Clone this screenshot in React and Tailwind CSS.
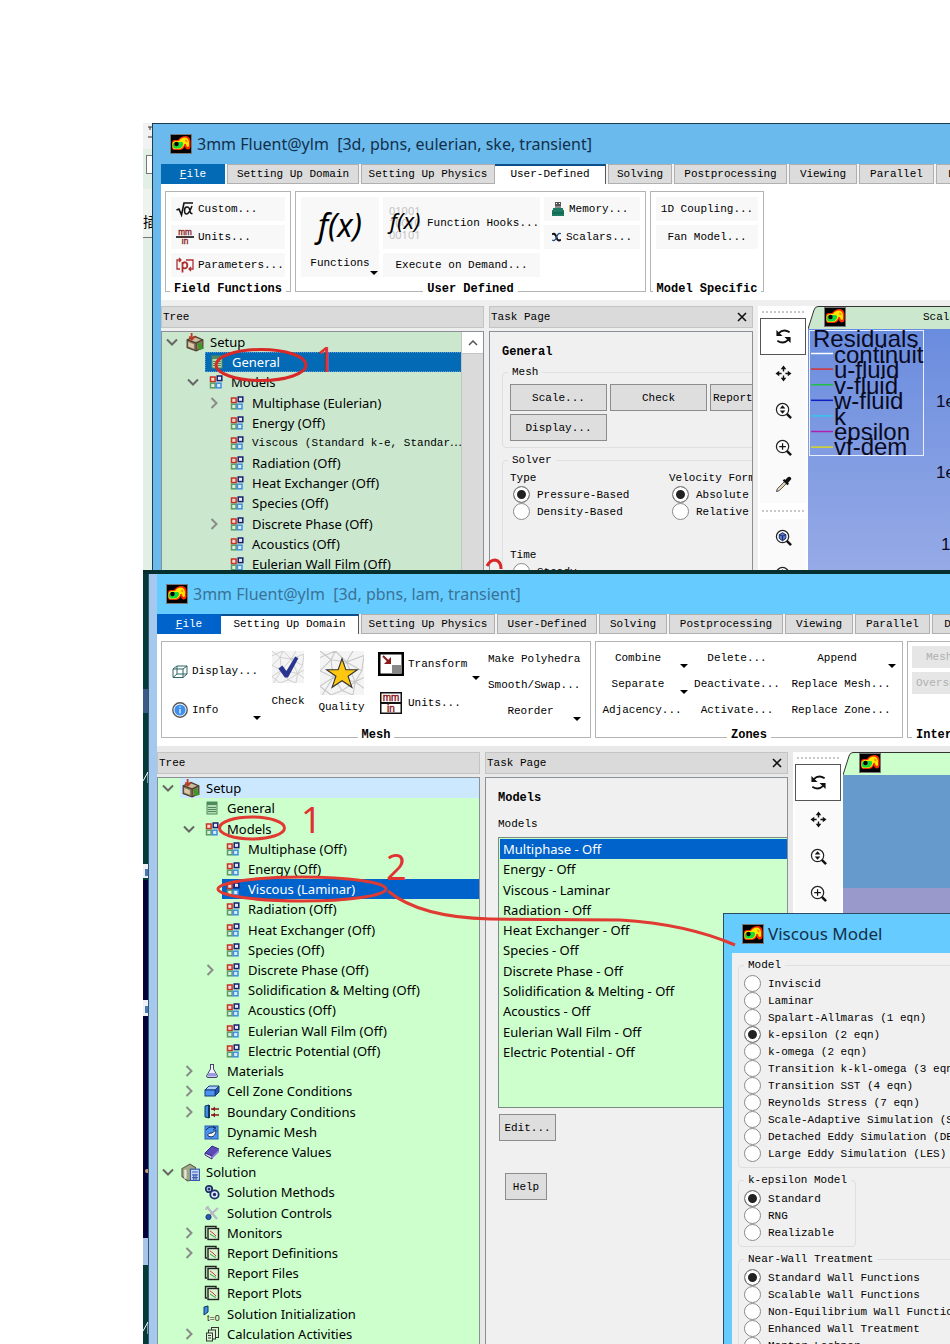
import React from "react";

const MONO = "font-['Liberation_Mono','Noto_Sans_CJK_SC',monospace] text-[11px] leading-4 text-black";
const SANS = "font-['Noto_Sans','Open_Sans',sans-serif]";

/* ---------- icons ---------- */

function FluentIcon() {
  return (
    <svg viewBox="0 0 22 20" className="h-5 w-[22px] shrink-0" aria-hidden="true">
      <rect x="0.5" y="0.5" width="21" height="19" fill="#000" stroke="#777" />
      <path d="M2 9 Q2 6 5 6 H8 Q11 2 16 2 Q20 2.500 20.500 7 V13 Q20 16 17 15.500 Q15 14 14.500 12 Q14 16 9 16 H4 Q2 15.500 2 13Z" fill="#ff2a00" />
      <path d="M2.500 9.500 Q3 7 6 7 H9 Q11 3.500 15 3.500 Q18.500 4 19 8 V12 Q18 14 16.500 12 Q16 9 14.500 10 Q13 15 8.500 15 H4 Q2.500 14.500 2.500 13Z" fill="#ffe800" />
      <path d="M3 10 Q3.500 8 6 8 H12 Q14 9 12.500 12 Q11 14.500 8 14.500 H4.500 Q3 14 3 12Z" fill="#19d83b" />
      <path d="M15 5.500 L17 6 L17.500 8.500 L15.500 8Z" fill="#ff8a00" />
      <circle cx="6.500" cy="10" r="2.200" fill="#000" />
    </svg>
  );
}

function Square({ x, y, c, f }) {
  return <rect x={x} y={y} width="4.600" height="4.600" fill={f} stroke={c} strokeWidth="1.500" />;
}

const treeIcons = {
  setup: (
    <g>
      <path d="M1 6 L8 3 L15 6 V13 L9 16 L1 13Z" fill="#8a7a62" stroke="#4a3a2a" />
      <path d="M1 6 L9 9 L15 6 M9 9 V16" stroke="#4a3a2a" fill="none" />
      <path d="M2 8 L7 10 V14 L2 12Z" fill="#d8c8a8" />
      <path d="M3 6 L8 4 L13 6 L9 8Z" fill="#c8bca0" />
      <path d="M5 0 V4 M3 3 L5 6 L8 3" stroke="#c03a20" strokeWidth="1.6" fill="none" />
      <path d="M10 10 L13 8 L14 12 L16 14 L12 15Z" fill="#3a9a20" />
    </g>
  ),
  sheet: (
    <g>
      <rect x="3" y="2" width="10" height="12" fill="#b5dcb5" stroke="#4e8a5c" />
      <rect x="3" y="2" width="10" height="3" fill="#4e8a5c" />
      <path d="M4 7.500 H12 M4 9.500 H12 M4 11.500 H12" stroke="#4e8a5c" />
    </g>
  ),
  models: (
    <g>
      <Square x="2.500" y="3" c="#c83222" f="#f8d8d0" />
      <Square x="9.200" y="2" c="#15206e" f="#e8e8ff" />
      <Square x="2.500" y="9.200" c="#5c9a68" f="#d8f0d8" />
      <Square x="8.400" y="9.200" c="#3f8fe0" f="#d8ecff" />
    </g>
  ),
  flask: (
    <g>
      <path d="M6 1.500 H10 M6.500 2 V6 L2.500 13 Q2.500 14.500 4 14.500 H12 Q13.500 14.500 13.500 13 L9.500 6 V2" fill="#f4f4ff" stroke="#44446a" />
      <path d="M4.500 10 H11.500 L13 13.500 H3Z" fill="#9a9ae0" />
    </g>
  ),
  cell: (
    <g stroke="#163a7a">
      <path d="M1 7 L5 3 H15 L11 7Z" fill="#a8d0ff" />
      <path d="M11 7 L15 3 V9 L11 13Z" fill="#2458b0" />
      <rect x="1" y="7" width="10" height="6" fill="#4a94f0" />
    </g>
  ),
  bc: (
    <g>
      <path d="M1 2 L5 1 V14 L1 13Z" fill="#3f8fe0" stroke="#123060" />
      <path d="M5 1 V14" stroke="#123060" strokeWidth="2" />
      <path d="M7 5 H15 M7 11 H15" stroke="#8a1a1a" strokeWidth="1.6" />
      <path d="M11 2.500 L8 5 L11 7.500Z M11 8.500 L8 11 L11 13.500Z" fill="#8a1a1a" />
    </g>
  ),
  mesh: (
    <g>
      <rect x="1" y="2" width="13" height="13" fill="#4a94f0" stroke="#2a5ab0" />
      <path d="M2 6 Q6 1 11 4 M9 2 L12 4 L9 6" stroke="#123060" fill="none" />
      <path d="M4 12 Q3 9 8 9 L12 6 Q12 12 7 13Z" fill="#fff" stroke="#123060" />
    </g>
  ),
  book: (
    <g>
      <path d="M1 9 L8 2 L15 5 L8 12Z" fill="#5a4ab8" stroke="#3a2a80" />
      <path d="M1 9 V11 L8 15 V12Z" fill="#ded8f4" stroke="#3a2a80" />
      <path d="M8 12 L15 5 V8 L8 15Z" fill="#8a7ad8" />
    </g>
  ),
  solution: (
    <g>
      <path d="M0 5 L7 1 L12 4 V14 L5 16 L0 12Z" fill="#a0a888" stroke="#5a5a4a" />
      <path d="M3 6 V14" stroke="#e8ead8" strokeWidth="2" />
      <rect x="7.500" y="5.500" width="8" height="10" fill="#c8d8f8" stroke="#3a5aa8" />
      <path d="M9 8 H14 M9 10.500 H14 M9 13 H14 M10.500 10 V15 M12.500 10 V15" stroke="#3a5aa8" />
    </g>
  ),
  gears: (
    <g fill="#dfeaff" stroke="#1c2f66" strokeWidth="1.800">
      <circle cx="5" cy="5" r="3.200" />
      <circle cx="10.500" cy="10.500" r="4.200" />
      <circle cx="5" cy="5" r="0.600" />
      <circle cx="10.500" cy="10.500" r="0.800" />
    </g>
  ),
  tools: (
    <g>
      <path d="M3 2 L13 14 M14 3 L6 10" stroke="#b8b8c4" strokeWidth="2.200" />
      <path d="M2 5 Q2 1 5 2" stroke="#b8b8c4" strokeWidth="1.500" fill="none" />
      <circle cx="4.500" cy="12" r="2.600" fill="#2a5ab0" stroke="#163a7a" />
    </g>
  ),
  monitor: (
    <g>
      <path d="M3 13 H1.500 V1.500 H12 V3" fill="none" stroke="#222" strokeWidth="1.400" />
      <rect x="4" y="3.500" width="10.500" height="11" fill="#d8f4d0" stroke="#222" strokeWidth="1.400" />
      <path d="M6 6 L9 8 L12 11" stroke="#d04030" fill="none" />
      <path d="M6 9 L9 11 L12 12.500" stroke="#30a040" fill="none" />
    </g>
  ),
  init: (
    <g>
      <path d="M0 1 L4 0 V6 L0 9Z" fill="#3f8fe0" stroke="#123060" />
      <text x="3" y="15" fontSize="9" fontFamily="Liberation Sans" fill="#4a1010">t=0</text>
    </g>
  ),
  calc: (
    <g fill="#d8f4d0" stroke="#333">
      <rect x="7.500" y="1.500" width="7" height="10" />
      <rect x="4.500" y="4" width="7" height="9" />
      <rect x="2.500" y="7" width="6" height="8" />
      <path d="M4 9.500 H7 M4 12 H7" />
    </g>
  ),
};

function TreeIcon({ name }) {
  return (
    <svg
      viewBox="0 0 16 16"
      className={`overflow-visible ${name === "setup" || name === "solution" ? "h-[18px] w-[18px]" : "h-4 w-4"}`}
      aria-hidden="true"
    >
      {treeIcons[name]}
    </svg>
  );
}

function Chevron({ open }) {
  return (
    <svg viewBox="0 0 12 12" className="h-3 w-3" fill="none" stroke={open ? "#666" : "#8a8a8a"} strokeWidth="2" aria-hidden="true">
      <path d={open ? "M1 3.500 L6 8.500 L11 3.500" : "M3.500 1 L8.500 6 L3.500 11"} />
    </svg>
  );
}

function Caret({ className = "" }) {
  return (
    <svg viewBox="0 0 8 4" className={`h-1 w-2 shrink-0 ${className}`} aria-hidden="true">
      <path d="M0 0 H8 L4 4Z" fill="#000" />
    </svg>
  );
}

function MmIn({ boxed }) {
  return (
    <svg viewBox="0 0 22 22" className={boxed ? "h-[22px] w-[22px]" : "h-[18px] w-[18px]"} aria-hidden="true">
      {boxed && <rect x="0.750" y="0.750" width="20.500" height="20.500" fill="#fff" stroke="#111" strokeWidth="1.500" />}
      <text x="11" y="8.500" textAnchor="middle" fontSize="10" fontFamily="Liberation Sans" fill="#8a1a1a" stroke="#8a1a1a" strokeWidth="0.400">mm</text>
      <path d="M0 11 H22" stroke="#111" strokeWidth="2" />
      <text x="11" y="20" textAnchor="middle" fontSize="10" fontFamily="Liberation Sans" fill="#8a1a1a" stroke="#8a1a1a" strokeWidth="0.400">in</text>
    </svg>
  );
}

function SqrtAlpha() {
  return (
    <svg viewBox="0 0 18 16" className="h-4 w-[18px]" fill="none" stroke="#111" aria-hidden="true">
      <path d="M0.500 9 L3 8 L5.500 14 L8 2 H17" strokeWidth="1.600" />
      <path d="M16 5 Q13 13 10.500 13 Q8.500 13 8.500 9.500 Q8.500 6 11 6 Q13.500 6 14 10 Q14.500 13 16.500 12.500" strokeWidth="1.500" />
    </svg>
  );
}

function ParamIcon() {
  return (
    <svg viewBox="0 0 18 16" className="h-4 w-[18px] shrink-0" fill="none" stroke="#b03030" strokeWidth="1.300" aria-hidden="true">
      <path d="M4 12 H1 V3 H5 M3 1 L5 3 L3 5 M10 3 H17 V12 H13 M15 10 L13 12 L15 14" />
      <path d="M6.500 5 V15.500 M6.500 7 Q8 4.500 10 5.500 Q12 7 11 10 Q9.500 12.500 6.500 10.500" strokeWidth="1.800" />
    </svg>
  );
}

function MemoryIcon() {
  return (
    <svg viewBox="0 0 12 14" className="h-3.5 w-3" aria-hidden="true">
      <rect x="3" y="0" width="6" height="4" fill="#555" />
      <rect x="4" y="1" width="1" height="1" fill="#fff" />
      <rect x="7" y="1" width="1" height="1" fill="#fff" />
      <path d="M1 6 H11 V8 H12 V14 H0 V8 H1Z" fill="#1d7a63" />
      <path d="M3 4 H9 V6 H3Z" fill="#888" />
      <path d="M0 11 H12" stroke="#0d5a45" />
    </svg>
  );
}

function ScalarIcon() {
  return (
    <svg viewBox="0 0 12 12" className="h-3 w-3" fill="none" aria-hidden="true">
      <path d="M0 2.500 Q3 0 5 4 L7 9 Q9 12 12 9.500" stroke="#111" strokeWidth="2.600" />
      <path d="M12 1.500 Q9 0 7 4 L5 9 Q3 12 0 10" stroke="#24508c" strokeWidth="1.800" />
    </svg>
  );
}

function CubeIcon() {
  return (
    <svg viewBox="0 0 16 13" className="h-[13px] w-4" fill="none" stroke="#2f6464" aria-hidden="true">
      <path d="M1 4 H11 V12.500 H1Z M5 1 H15 V9 H5Z M1 4 L5 1 M11 4 L15 1 M11 12.500 L15 9 M1 12.500 L5 9" />
    </svg>
  );
}

function InfoIcon() {
  return (
    <svg viewBox="0 0 16 16" className="h-4 w-4" aria-hidden="true">
      <circle cx="8" cy="8" r="7.200" fill="#fff" stroke="#555" strokeWidth="1.400" />
      <circle cx="8" cy="8" r="5.600" fill="#3d8ff0" />
      <path d="M8 7 V11.500 M8 4.500 V5.800" stroke="#cfe4ff" strokeWidth="1.500" />
    </svg>
  );
}

function MeshPatch({ size, children }) {
  return (
    <svg viewBox="0 0 40 40" className={size} aria-hidden="true">
      <rect width="40" height="40" fill="#f4f4f4" />
      <path
        d="M0 6 L14 0 L24 10 L40 4 M0 18 L10 8 L24 10 L30 0 M0 18 L12 24 L24 10 L38 18 L40 4 M0 32 L12 24 L20 36 L32 28 L38 18 M0 32 L10 40 L20 36 L30 40 L32 28 L40 34 M10 8 L12 24 L32 28 M14 0 L10 8 L0 0 M2 40 L12 24 M24 10 L32 28 L40 24"
        stroke="#c8c8c8"
        fill="none"
      />
      {children}
    </svg>
  );
}

function TransformIcon() {
  return (
    <svg viewBox="0 0 26 24" className="h-6 w-[26px]" aria-hidden="true">
      <rect x="1.250" y="1.250" width="23.500" height="21.500" fill="#fff" stroke="#000" strokeWidth="2.500" />
      <path d="M14 13 H23.500 V21.500 H14Z" fill="#888" />
      <path d="M5 4 L12 11" stroke="#8a1a1a" strokeWidth="2" />
      <path d="M13 5 V12 H6Z" fill="#8a1a1a" />
    </svg>
  );
}

const lens = (
  <g>
    <circle cx="8" cy="8" r="6.500" fill="#fff" stroke="#222" strokeWidth="1.300" />
    <path d="M12.500 12.500 L17 17" stroke="#111" strokeWidth="2.600" />
  </g>
);

const toolIcons = {
  rotate: (
    <g>
      <path d="M4 5.500 Q9 0.500 15.500 4.500 M14 12.500 Q9 17.500 2.500 13.500" fill="none" stroke="#111" strokeWidth="2" />
      <path d="M1.500 2 V8.500 H8Z M16.500 16 V9.500 H10Z" fill="#111" />
    </g>
  ),
  move: (
    <g fill="#111">
      <path d="M9 0.500 L12 4.500 H6Z M9 17.500 L12 13.500 H6Z M0.500 9 L4.500 6 V12Z M17.500 9 L13.500 6 V12Z" />
      <path d="M9 4 V7 M9 11 V14 M4 9 H7 M11 9 H14" stroke="#111" strokeWidth="1.500" />
    </g>
  ),
  zoomBox: (
    <g>
      {lens}
      <path d="M8 3.500 L11 7 H5Z M8 12.500 L11 9 H5Z" fill="#111" />
    </g>
  ),
  zoomIn: (
    <g>
      {lens}
      <path d="M8 4.500 V11.500 M4.500 8 H11.500" stroke="#111" strokeWidth="1.300" />
    </g>
  ),
  probe: (
    <g>
      <path d="M1.500 16.500 L2.500 13.500 L10 6 L12 8 L4.500 15.500Z" fill="#e8d8b8" stroke="#444" />
      <path d="M9 4 L14 9" stroke="#111" strokeWidth="2.400" />
      <path d="M11 5 L14 2 Q16 1 16.500 3 L13 7Z" fill="#111" stroke="#111" strokeWidth="1.500" />
    </g>
  ),
  fit: (
    <g>
      {lens}
      <path d="M4.500 6 L8 4 L11.500 6 V10 L8 12.500 L4.500 10Z" fill="#5a7ad0" stroke="#16245c" />
      <path d="M4.500 6 L8 7.500 L11.500 6 M8 7.500 V12" stroke="#16245c" fill="none" />
    </g>
  ),
};

/* ---------- shared parts ---------- */

function TitleBar({ text, className }) {
  return (
    <header className={`flex h-10 shrink-0 items-center gap-[5px] pl-[9px] ${className}`}>
      <FluentIcon />
      <h1 className={`${SANS} whitespace-pre text-base leading-6`}>{text}</h1>
    </header>
  );
}

function Tabs({ items, fileClass }) {
  return (
    <nav className={`${MONO} flex h-5 shrink-0 overflow-hidden bg-[#f4f4f4]`}>
      <button className={`w-16 shrink-0 text-white ${fileClass}`}>
        <span className="underline">F</span>ile
      </button>
      {items.map(([label, width, active]) => (
        <button
          key={label}
          className={`shrink-0 overflow-hidden whitespace-nowrap text-center ${width} ${
            active
              ? "border-t-2 border-r border-t-[#0d4f8a] border-r-[#555] bg-white pb-0.5"
              : "ml-0.5 border border-[#b0b0b0] bg-[#dcdcdc]"
          }`}
        >
          {label}
        </button>
      ))}
    </nav>
  );
}

function Group({ title, className = "", children }) {
  return (
    <section className={`flex shrink-0 flex-col border border-[#b4b4b4] ${className}`}>
      <div className="min-h-0 flex-1">{children}</div>
      <h2 className="-mb-1.5 self-center whitespace-nowrap bg-white px-1 font-['Liberation_Mono',monospace] text-xs leading-4 font-bold text-black">
        {title}
      </h2>
    </section>
  );
}

function Tool({ className = "", children }) {
  return (
    <button className={`flex h-6 items-center gap-1 whitespace-nowrap bg-[#f8f8f8] ${className}`}>{children}</button>
  );
}

function PanelHeader({ title, closable }) {
  return (
    <div className={`${MONO} flex h-[22px] shrink-0 items-center justify-between border border-[#c4c4c4] bg-[#dadada] pl-px pr-1`}>
      <span>{title}</span>
      {closable && (
        <button aria-label={`Close ${title}`} className="p-px">
          <svg viewBox="0 0 10 10" className="h-2.5 w-2.5" stroke="#111" strokeWidth="1.600" aria-hidden="true">
            <path d="M1 1 L9 9 M9 1 L1 9" />
          </svg>
        </button>
      )}
    </div>
  );
}

const indents = ["pl-0", "pl-[21px]", "pl-[42px]"];

function TreeRow({ row, selected, hinted }) {
  const [level, icon, label, state, mono] = row;
  return (
    <li className={`flex min-h-0 items-stretch ${indents[level]}`}>
      <span className="flex w-5 shrink-0 items-center justify-center">
        {state && <Chevron open={state === "open"} />}
      </span>
      <span className={`ml-0.5 flex min-w-0 flex-1 items-center ${selected || ""} ${hinted || ""}`}>
        <span className="flex w-[22px] shrink-0 items-center justify-center">
          <TreeIcon name={icon} />
        </span>
        <span className={`ml-1 whitespace-nowrap ${mono ? MONO : `${SANS} text-[13px] leading-5`}`}>{label}</span>
      </span>
    </li>
  );
}

function Radio({ label, name, checked }) {
  return (
    <label className="flex h-[17px] items-center gap-[7px] whitespace-nowrap">
      <input
        type="radio"
        name={name}
        defaultChecked={checked}
        className="h-[17px] w-[17px] shrink-0 appearance-none rounded-full border border-[#8a8a8a] bg-white checked:bg-[#222] checked:shadow-[inset_0_0_0_3px_#fff]"
      />
      {label}
    </label>
  );
}

function Field({ legend, className = "", children }) {
  return (
    <fieldset className={`min-w-0 rounded-sm border border-[#dce0e2] ${className}`}>
      <legend className="ml-[5px] px-1">{legend}</legend>
      {children}
    </fieldset>
  );
}

function PushButton({ className = "", children }) {
  return (
    <button className={`h-[27px] shrink-0 overflow-hidden whitespace-nowrap border border-[#8c8c8c] bg-[#dedede] ${className}`}>
      {children}
    </button>
  );
}

function Handle({ className }) {
  return (
    <div className={`flex items-center pl-1 ${className}`}>
      <div className="w-[42px] border-t-2 border-dotted border-[#c8c8c8]" />
    </div>
  );
}

function ViewTools({ groups }) {
  return (
    <div className="w-[50px] shrink-0 overflow-hidden bg-white">
      {groups.map((names, g) => (
        <div key={g}>
          <Handle className={g === 0 ? "h-3" : "h-4"} />
          {names.map((name, i) => (
            <button
              key={i}
              aria-label={name}
              className={`ml-0.5 flex h-[37px] w-[46px] items-center justify-center ${
                g === 0 && i === 0 ? "border border-[#555] bg-white" : "bg-[#fafafa]"
              }`}
            >
              <svg viewBox="0 0 18 18" className="h-[17px] w-[17px]" aria-hidden="true">
                {toolIcons[name]}
              </svg>
            </button>
          ))}
        </div>
      ))}
    </div>
  );
}

function ViewTab({ fill, bg, label }) {
  return (
    <div className="flex h-[23px] shrink-0 overflow-hidden bg-white">
      <svg viewBox="0 0 10 23" className="h-[23px] w-2.5 shrink-0" aria-hidden="true">
        <path d="M0 23 L6 4 Q7 0.500 10 0.500 V23Z" fill={fill} />
        <path d="M0 23 L6 4 Q7 0.500 10 0.500" fill="none" stroke="#333" />
      </svg>
      <div className={`${MONO} flex flex-1 items-start border-t border-[#333] pl-1.5 ${bg}`}>
        <FluentIcon />
        <span className="flex-1 whitespace-nowrap pt-0.5 pl-[77px]">{label}</span>
      </div>
    </div>
  );
}

/* ---------- first window ---------- */

const tree1 = [
  [0, "setup", "Setup", "open"],
  [1, "sheet", "General"],
  [1, "models", "Models", "open"],
  [2, "models", "Multiphase (Eulerian)", "closed"],
  [2, "models", "Energy (Off)"],
  [2, "models", "Viscous (Standard k-e, Standar⋯", null, true],
  [2, "models", "Radiation (Off)"],
  [2, "models", "Heat Exchanger (Off)"],
  [2, "models", "Species (Off)"],
  [2, "models", "Discrete Phase (Off)", "closed"],
  [2, "models", "Acoustics (Off)"],
  [2, "models", "Eulerian Wall Film (Off)"],
];

const residuals = [
  ["continuit", "#ffffff"],
  ["u-fluid", "#d83030"],
  ["v-fluid", "#20c040"],
  ["w-fluid", "#1020c0"],
  ["k", "#30c8f0"],
  ["epsilon", "#b020b0"],
  ["vf-dem", "#d8d820"],
];

function ResidualPlot() {
  return (
    <div className="min-h-0 flex-1 overflow-hidden bg-linear-to-b from-[#6a8cde] to-[#96aae6]">
      <svg viewBox="0 0 142 241" className="h-[241px] w-[142px]" fontFamily="Liberation Sans, Arial, sans-serif" role="img" aria-label="Residuals">
        <clipPath id="legend">
          <rect x="1" y="1" width="115" height="126" />
        </clipPath>
        <rect x="1.500" y="1.500" width="114" height="125" fill="none" stroke="#e8f0ff" />
        <g clipPath="url(#legend)" fontSize="24" fill="#0a0a1e">
          <text x="5" y="18">Residuals</text>
          {residuals.map(([name, color], i) => (
            <g key={name}>
              <path d={`M3 ${24.5 + i * 15.6} h22`} stroke={color} strokeWidth="1.500" />
              <text x="26" y={34 + i * 15.4}>{name}</text>
            </g>
          ))}
        </g>
        <g fontSize="17" fill="#0a0a1e">
          <text x="128" y="78">1e</text>
          <text x="128" y="149">1e</text>
          <text x="133" y="221">1</text>
        </g>
      </svg>
    </div>
  );
}

function FirstWindow() {
  return (
    <div className="flex h-[447px] shrink-0 overflow-hidden">
      <div className="w-[9px] shrink-0 overflow-hidden bg-[#e2efe5]">
        <svg viewBox="0 0 9 66" className="h-[66px] w-[9px]" aria-hidden="true">
          <rect width="9" height="26" fill="#f2f2f2" />
          <path d="M5 4 H9 M5 14 H9 M7 4 V7" stroke="#333" />
          <rect x="3.500" y="32.500" width="8" height="18" fill="#fff" stroke="#777" />
        </svg>
        <div className="h-[49px] overflow-hidden whitespace-nowrap border-b border-[#777] bg-[#eef3ee] pt-[22px] font-['Noto_Sans_CJK_SC',sans-serif] text-sm leading-5">插</div>
      </div>
      <div className="flex min-w-0 flex-1 flex-col border-t border-l border-[#1d3d55] bg-[#6bbaee] pl-2">
        <TitleBar text="3mm Fluent@ylm  [3d, pbns, eulerian, ske, transient]" className="text-[#12304a]" />
        <Tabs
          fileClass="bg-[#036ab5]"
          items={[
            ["Setting Up Domain", "w-[132px]"],
            ["Setting Up Physics", "w-[134px]"],
            ["User-Defined", "w-[111px]", true],
            ["Solving", "w-16"],
            ["Postprocessing", "w-[113px]"],
            ["Viewing", "w-[68px]"],
            ["Parallel", "w-[75px]"],
            ["Design", "w-[64px]"],
          ]}
        />
        <div className={`${MONO} flex h-[116px] shrink-0 gap-1 overflow-hidden bg-white pt-[7px] pl-1`}>
          <Group title="Field Functions" className="h-[101px] w-[126px]">
            <div className="flex flex-col gap-1 p-[5px]">
              <Tool className="px-[5px]"><SqrtAlpha />Custom...</Tool>
              <Tool className="px-[5px]"><MmIn />Units...</Tool>
              <Tool className="px-[5px]"><ParamIcon />Parameters...</Tool>
            </div>
          </Group>
          <Group title="User Defined" className="h-[101px] w-[351px]">
            <div className="flex gap-1 p-[5px]">
              <button className="flex h-20 w-[78px] flex-col items-center bg-[#f8f8f8]">
                <span className={`${SANS} h-[58px] pt-2 text-[32px] leading-10 italic`}>f(x)</span>
                <span className="flex w-full items-center justify-center">Functions</span>
                <Caret className="mr-px self-end" />
              </button>
              <div className="flex w-[157px] flex-col gap-1">
                <button className="flex h-[52px] items-center gap-0.5 bg-[#f8f8f8] pl-1">
                  <svg viewBox="0 0 38 36" className="h-9 w-[38px] shrink-0" fontFamily="Noto Sans, sans-serif" aria-hidden="true">
                    <g fontSize="11" fill="#c4c4c4">
                      <text x="2" y="10">01001</text>
                      <text x="2" y="22">10010</text>
                      <text x="2" y="34">00101</text>
                    </g>
                    <text x="3" y="24" fontSize="22" fontStyle="italic" fill="#000">f(x)</text>
                  </svg>
                  <span className="whitespace-nowrap">Function Hooks...</span>
                </button>
                <Tool className="justify-center">Execute on Demand...</Tool>
              </div>
              <div className="flex w-24 flex-col gap-1">
                <Tool className="gap-[5px] px-2"><MemoryIcon />Memory...</Tool>
                <Tool className="gap-[5px] px-2"><ScalarIcon />Scalars...</Tool>
              </div>
            </div>
          </Group>
          <Group title="Model Specific" className="h-[101px] w-[114px]">
            <div className="flex flex-col gap-1 p-[5px]">
              <Tool className="justify-center">1D Coupling...</Tool>
              <Tool className="justify-center">Fan Model...</Tool>
            </div>
          </Group>
        </div>
        <div className="flex min-h-0 flex-1 gap-[5px] bg-[#efefef] pt-1.5">
          <aside className="flex w-[323px] shrink-0 flex-col gap-[3px]">
            <PanelHeader title="Tree" />
            <div className="flex min-h-0 flex-1 overflow-hidden border border-b-0 border-[#8a9096] bg-[#cbe8cf]">
              <ul className="grid h-[242px] min-w-0 flex-1 grid-rows-12">
                {tree1.map((row, i) => (
                  <TreeRow key={row[2]} row={row} selected={i === 1 ? "border border-dotted border-[#5a9ad0] bg-[#036ab5] text-white" : ""} />
                ))}
              </ul>
              <div className="w-[22px] shrink-0 border-l border-[#c4c4c4] bg-[#dadada]">
                <button aria-label="Scroll up" className="flex h-[22px] w-full items-center justify-center border-b border-[#c4c4c4] bg-white">
                  <svg viewBox="0 0 10 6" className="h-1.5 w-2.5" fill="none" stroke="#555" strokeWidth="1.500" aria-hidden="true">
                    <path d="M1 5 L5 1 L9 5" />
                  </svg>
                </button>
              </div>
            </div>
          </aside>
          <main className="flex w-[264px] shrink-0 flex-col gap-[3px]">
            <PanelHeader title="Task Page" closable />
            <div className={`${MONO} min-h-0 flex-1 overflow-hidden border border-b-0 border-[#8a9096] bg-[#f0f0f0] pt-3 pl-3`}>
              <h2 className="text-xs leading-4 font-bold">General</h2>
              <Field legend="Mesh" className="mt-1 h-[84px] w-[300px]">
                <div className="flex flex-wrap gap-[3px] pt-1 pl-[7px]">
                  <PushButton className="w-[97px]">Scale...</PushButton>
                  <PushButton className="w-[97px]">Check</PushButton>
                  <PushButton className="w-[88px] pl-0.5 text-left">Report Quality</PushButton>
                  <PushButton className="w-[97px]">Display...</PushButton>
                </div>
              </Field>
              <Field legend="Solver" className="mt-1 w-[300px]">
                <div className="grid grid-cols-[159px_1fr] pt-0.5 pl-[7px]">
                  <div>
                    <p>Type</p>
                    <div className="pl-[3px]">
                      <Radio name="type" label="Pressure-Based" checked />
                      <Radio name="type" label="Density-Based" />
                    </div>
                  </div>
                  <div>
                    <p className="whitespace-nowrap">Velocity Formulation</p>
                    <div className="pl-[3px]">
                      <Radio name="velocity" label="Absolute" checked />
                      <Radio name="velocity" label="Relative" />
                    </div>
                  </div>
                </div>
                <div className="pt-[27px] pl-[7px]">
                  <p>Time</p>
                  <div className="pl-[3px]">
                    <Radio name="time" label="Steady" />
                  </div>
                </div>
              </Field>
            </div>
          </main>
          <div className="flex min-w-0 flex-1">
            <ViewTools groups={[["rotate", "move", "zoomBox", "zoomIn", "probe"], ["fit", "zoomBox"]]} />
            <div className="flex min-w-0 flex-1 flex-col">
              <ViewTab fill="#cbe8cf" bg="bg-[#cbe8cf]" label="Scaled Residuals" />
              <ResidualPlot />
            </div>
          </div>
        </div>
      </div>
    </div>
  );
}

/* ---------- second window ---------- */

const tree2 = [
  [0, "setup", "Setup", "open"],
  [1, "sheet", "General"],
  [1, "models", "Models", "open"],
  [2, "models", "Multiphase (Off)"],
  [2, "models", "Energy (Off)"],
  [2, "models", "Viscous (Laminar)"],
  [2, "models", "Radiation (Off)"],
  [2, "models", "Heat Exchanger (Off)"],
  [2, "models", "Species (Off)"],
  [2, "models", "Discrete Phase (Off)", "closed"],
  [2, "models", "Solidification & Melting (Off)"],
  [2, "models", "Acoustics (Off)"],
  [2, "models", "Eulerian Wall Film (Off)"],
  [2, "models", "Electric Potential (Off)"],
  [1, "flask", "Materials", "closed"],
  [1, "cell", "Cell Zone Conditions", "closed"],
  [1, "bc", "Boundary Conditions", "closed"],
  [1, "mesh", "Dynamic Mesh"],
  [1, "book", "Reference Values"],
  [0, "solution", "Solution", "open"],
  [1, "gears", "Solution Methods"],
  [1, "tools", "Solution Controls"],
  [1, "monitor", "Monitors", "closed"],
  [1, "monitor", "Report Definitions", "closed"],
  [1, "monitor", "Report Files"],
  [1, "monitor", "Report Plots"],
  [1, "init", "Solution Initialization"],
  [1, "calc", "Calculation Activities", "closed"],
];

const modelList = [
  "Multiphase - Off",
  "Energy - Off",
  "Viscous - Laminar",
  "Radiation - Off",
  "Heat Exchanger - Off",
  "Species - Off",
  "Discrete Phase - Off",
  "Solidification & Melting - Off",
  "Acoustics - Off",
  "Eulerian Wall Film - Off",
  "Electric Potential - Off",
];

function Cmd({ className = "", caret, children }) {
  return (
    <button className={`flex h-[26px] items-center whitespace-nowrap ${className}`}>
      <span className="flex-1">{children}</span>
      {caret && <Caret className="mt-4" />}
    </button>
  );
}

function MeshGroup() {
  return (
    <Group title="Mesh" className="h-[97px] w-[430px]">
      <div className="flex pt-1">
        <div className="flex w-[103px] flex-col gap-[13px] pt-3 pl-2.5">
          <button className="flex h-[26px] items-center gap-1"><CubeIcon />Display...</button>
          <button className="flex h-[26px] items-center gap-1">
            <InfoIcon />
            <span className="flex-1 text-left">Info</span>
            <Caret className="mt-4 mr-1" />
          </button>
        </div>
        <button className="flex w-[46px] flex-col items-center gap-2.5 pt-[5px]">
          <MeshPatch size="h-8 w-8">
            <path d="M8 22 L13 18 L18 25 L29 7 L33 9 L20 33 L16 33Z" fill="#2a3590" />
          </MeshPatch>
          Check
        </button>
        <button className="flex w-[61px] flex-col items-center gap-1 pt-[5px]">
          <MeshPatch size="h-11 w-11">
            <path d="M20 7 L23.500 17 H34 L25.500 23 L29 33 L20 27 L11 33 L14.500 23 L6 17 H16.500Z" fill="#ffc810" stroke="#333" />
          </MeshPatch>
          Quality
        </button>
        <div className="flex w-[108px] flex-col gap-[13px] pt-[5px] pl-1.5">
          <button className="flex h-[26px] items-center gap-1 whitespace-nowrap">
            <TransformIcon />
            <span className="flex-1 text-left">Transform</span>
            <Caret className="mt-7" />
          </button>
          <button className="flex h-[26px] items-center gap-1.5 pl-0.5"><MmIn boxed />Units...</button>
        </div>
        <div className="w-[105px] pl-2">
          <Cmd className="w-full text-left">Make Polyhedra</Cmd>
          <Cmd className="w-full text-left">Smooth/Swap...</Cmd>
          <Cmd className="w-full pr-1 text-center" caret>Reorder</Cmd>
        </div>
      </div>
    </Group>
  );
}

function ZonesGroup() {
  return (
    <Group title="Zones" className="h-[97px] w-[308px]">
      <div className="grid grid-cols-[92px_98px_1fr] pt-[3px] pr-1.5 text-center">
        <Cmd caret>Combine</Cmd>
        <Cmd>Delete...</Cmd>
        <Cmd caret>Append</Cmd>
        <Cmd caret>Separate</Cmd>
        <Cmd>Deactivate...</Cmd>
        <Cmd>Replace Mesh...</Cmd>
        <Cmd>Adjacency...</Cmd>
        <Cmd>Activate...</Cmd>
        <Cmd>Replace Zone...</Cmd>
      </div>
    </Group>
  );
}

const viscousModels = [
  "Inviscid",
  "Laminar",
  "Spalart-Allmaras (1 eqn)",
  "k-epsilon (2 eqn)",
  "k-omega (2 eqn)",
  "Transition k-kl-omega (3 eqn)",
  "Transition SST (4 eqn)",
  "Reynolds Stress (7 eqn)",
  "Scale-Adaptive Simulation (SAS)",
  "Detached Eddy Simulation (DES)",
  "Large Eddy Simulation (LES)",
];

function RadioField({ legend, name, options, checked, className }) {
  return (
    <Field legend={legend} className={className}>
      <div className="pt-0.5 pb-[5px] pl-[5px]">
        {options.map((o) => (
          <Radio key={o} name={name} label={o} checked={o === checked} />
        ))}
      </div>
    </Field>
  );
}

function ViscousDialog() {
  return (
    <div role="dialog" aria-label="Viscous Model" className="absolute top-[339px] right-0 bottom-0 left-[580px] flex flex-col overflow-hidden border-t border-l border-[#2c4c66] bg-[#66ccff] pl-2">
      <div className="flex h-[39px] shrink-0 items-center gap-1 pl-2.5">
        <FluentIcon />
        <h2 className={`${SANS} whitespace-nowrap text-[17px] leading-6 text-[#12304a]`}>Viscous Model</h2>
      </div>
      <div className={`${MONO} flex min-h-0 flex-1 flex-col gap-1 overflow-hidden bg-[#f0f0f0] pt-1 pl-1.5`}>
        <RadioField legend="Model" name="viscous" options={viscousModels} checked="k-epsilon (2 eqn)" className="w-80 shrink-0" />
        <RadioField legend="k-epsilon Model" name="ke" options={["Standard", "RNG", "Realizable"]} checked="Standard" className="w-[118px] shrink-0" />
        <RadioField
          legend="Near-Wall Treatment"
          name="wall"
          options={["Standard Wall Functions", "Scalable Wall Functions", "Non-Equilibrium Wall Functions", "Enhanced Wall Treatment", "Menter-Lechner"]}
          checked="Standard Wall Functions"
          className="w-80 shrink-0"
        />
      </div>
    </div>
  );
}

function SecondWindow() {
  return (
    <div className="relative flex min-h-0 flex-1 overflow-hidden border-t-4 border-[#06302f]">
      <div className="w-[5px] shrink-0 bg-[#04363a]">
        <svg viewBox="0 0 5 770" className="h-[770px] w-[5px]" aria-hidden="true">
          <rect width="5" height="770" fill="#053a3a" />
          <rect y="306" width="5" height="365" fill="#02023c" />
          <rect y="115" width="5" height="24" fill="#3b5a86" />
          <path d="M0 207 L5 198 V209" stroke="#fff" fill="none" />
          <rect y="290" width="5" height="14" fill="#eef2f8" />
          <rect y="426" width="5" height="16" fill="#eef2f8" />
          <rect x="2" y="295" width="3" height="7" fill="#4a7ab0" />
          <rect x="2" y="432" width="3" height="7" fill="#4a7ab0" />
          <circle cx="4" cy="597" r="2" fill="#c8a070" />
          <rect y="664" width="5" height="27" fill="#a8c4e8" />
          <path d="M0 757 L5 748 V760" stroke="#fff" fill="none" />
        </svg>
      </div>
      <div className="flex min-w-0 flex-1 border-l border-[#33566a] bg-[#a5c8ef] pl-2">
        <div className="flex min-w-0 flex-1 flex-col">
          <TitleBar text="3mm Fluent@ylm  [3d, pbns, lam, transient]" className="bg-[#66ccff] text-[#3a7296]" />
          <Tabs
            fileClass="bg-[#0063cc]"
            items={[
              ["Setting Up Domain", "w-[138px]", true],
              ["Setting Up Physics", "w-[134px]"],
              ["User-Defined", "w-[100px]"],
              ["Solving", "w-[68px]"],
              ["Postprocessing", "w-[114px]"],
              ["Viewing", "w-[68px]"],
              ["Parallel", "w-[75px]"],
              ["Design", "w-[64px]"],
            ]}
          />
          <div className={`${MONO} flex h-28 shrink-0 gap-1 overflow-hidden bg-white pt-[7px] pl-1`}>
            <MeshGroup />
            <ZonesGroup />
            <Group title="Interfaces" className="h-[97px] w-[90px]">
              <div className="flex flex-col gap-1 p-1 text-[#b0b0b0]">
                <button className="h-[22px] bg-[#e6e6e6] pl-3.5 text-left">Mesh...</button>
                <button className="h-[22px] bg-[#e6e6e6] pl-1 text-left">Overset...</button>
              </div>
            </Group>
          </div>
          <div className="flex min-h-0 flex-1 gap-[5px] bg-[#e9e9e9] pt-1.5">
            <aside className="flex w-[323px] shrink-0 flex-col gap-[3px]">
              <PanelHeader title="Tree" />
              <div className="min-h-0 flex-1 overflow-hidden border-x border-t border-[#8a9096] bg-[#ccffcc]">
                <ul className="grid h-full auto-rows-fr">
                  {tree2.map((row, i) => (
                    <TreeRow
                      key={row[2]}
                      row={row}
                      selected={i === 5 ? "bg-[#0063cc] text-white" : ""}
                      hinted={i === 0 ? "bg-[#cce8ff]" : ""}
                    />
                  ))}
                </ul>
              </div>
            </aside>
            <main className="flex w-[303px] shrink-0 flex-col gap-[3px]">
              <PanelHeader title="Task Page" closable />
              <div className={`${MONO} min-h-0 flex-1 overflow-hidden border-x border-t border-[#8a9096] bg-[#f0f0f0] pt-3 pl-3`}>
                <h2 className="text-xs leading-4 font-bold">Models</h2>
                <p className="pt-2.5">Models</p>
                <div className="mt-[5px] h-[271px] border-t border-b border-l border-[#7a8a84] bg-[#ccffcc] pt-px pl-px">
                  <ul className={`${SANS} grid h-[223px] auto-rows-fr text-[13px] leading-5`}>
                    {modelList.map((m, i) => (
                      <li key={m} className={`flex items-center pl-[3px] ${i === 0 ? "bg-[#0063cc] text-white" : ""}`}>{m}</li>
                    ))}
                  </ul>
                </div>
                <div className="flex flex-col items-start gap-8 pt-1.5 pl-px">
                  <PushButton className="w-[57px]">Edit...</PushButton>
                  <PushButton className="ml-1.5 w-[42px]">Help</PushButton>
                </div>
              </div>
            </main>
            <div className="flex min-w-0 flex-1">
              <ViewTools groups={[["rotate", "move", "zoomBox", "zoomIn"]]} />
              <div className="flex min-w-0 flex-1 flex-col">
                <ViewTab fill="#ccffcc" bg="bg-[#ccffcc]" label="" />
                <div className="h-[113px] shrink-0 bg-[#6699cc]" />
                <div className="flex-1 bg-[#9999cc]" />
              </div>
            </div>
          </div>
        </div>
      </div>
      <ViscousDialog />
    </div>
  );
}

/* ---------- hand-drawn marks ---------- */

function Marks() {
  const num = `${SANS} absolute text-[#e03232]`;
  return (
    <div className="pointer-events-none absolute inset-0 overflow-hidden">
      <svg viewBox="0 0 950 1344" className="absolute top-0 left-0 h-[1344px] w-[950px]" fill="none" stroke="#e03a32" strokeWidth="3" aria-hidden="true">
        <ellipse cx="261" cy="365" rx="45" ry="15.500" stroke="#d82828" />
        <ellipse cx="252" cy="828" rx="32.500" ry="11" />
        <ellipse cx="302" cy="889" rx="84" ry="12" />
        <path d="M388 891 C412 911 450 918 490 919 L620 920 C670 923 705 932 735 945" />
        <path d="M487 566 Q490 560 495 560 Q501 561 501 569" stroke="#d82828" />
      </svg>
      <span className={`${num} top-[336px] left-[316px] text-[34px] leading-[46px]`}>1</span>
      <span className={`${num} top-[797px] left-[301px] text-[36px] leading-[46px]`}>1</span>
      <span className={`${num} top-[844px] left-[386px] text-[36px] leading-[46px]`}>2</span>
    </div>
  );
}

export default function App() {
  return (
    <div className="relative flex h-screen flex-col overflow-hidden bg-white pt-[123px] pl-[143px]">
      <FirstWindow />
      <SecondWindow />
      <Marks />
    </div>
  );
}
